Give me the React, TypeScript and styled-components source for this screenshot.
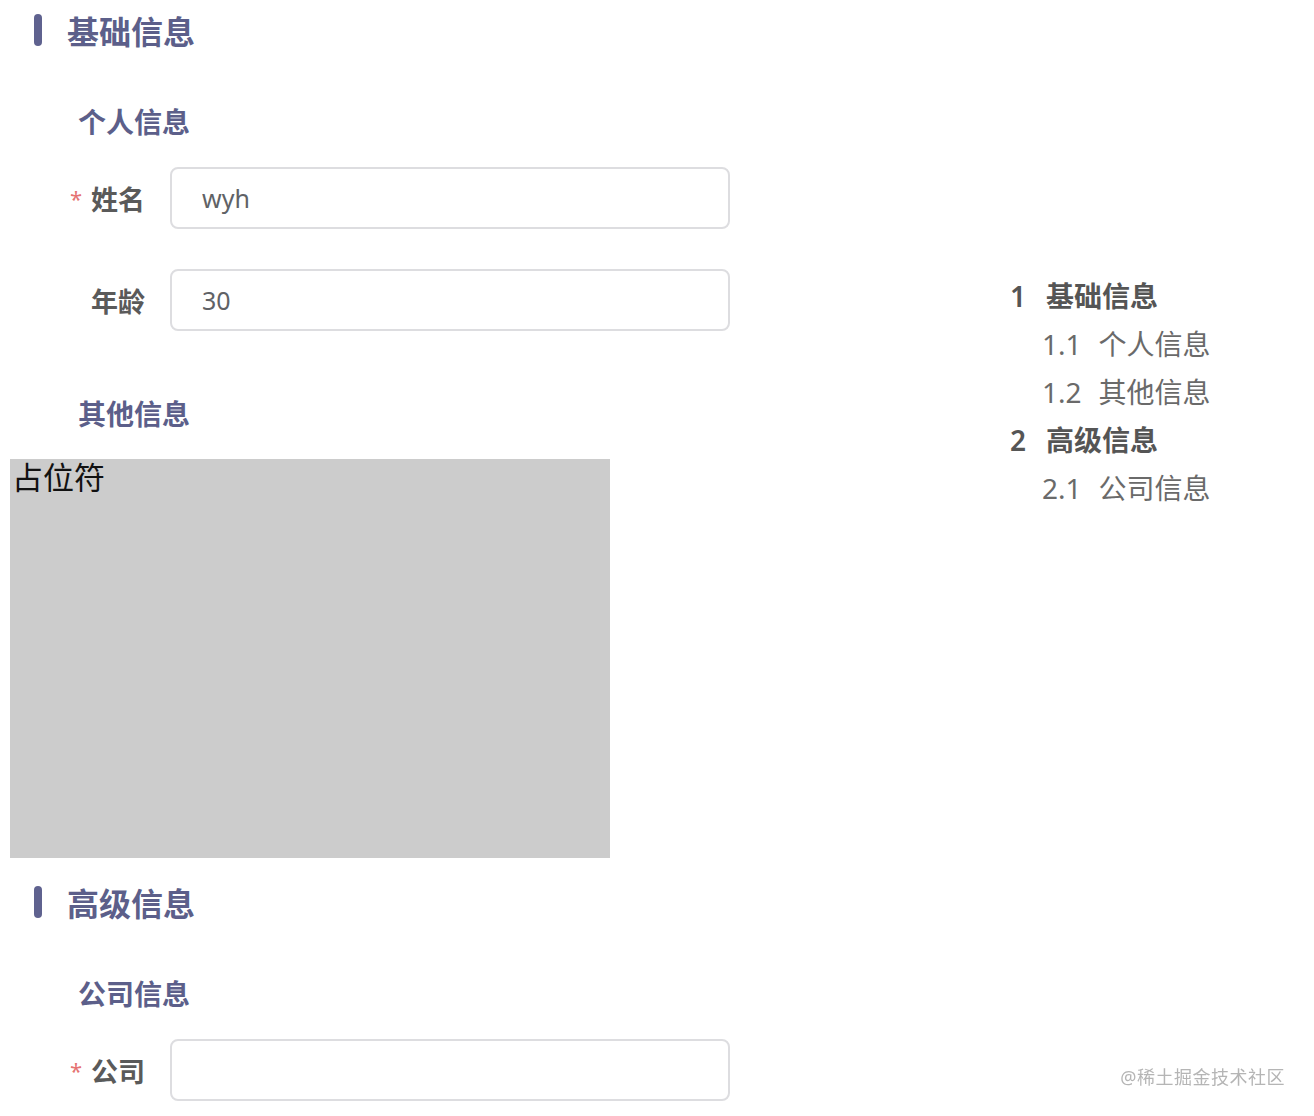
import React from 'react';
import styled, {createGlobalStyle} from 'styled-components';

const GlobalStyle = createGlobalStyle`
  body {
    margin: 0;
    background: #FFFFFF;
    font-family: "Noto Sans", "Noto Sans CJK SC", sans-serif;
  }
`;

const Page = styled.div`
  display: flex;
  align-items: flex-start;
  width: 1314px;
  padding: 0 10px;
  box-sizing: border-box;
`;

const Main = styled.div`
  display: flex;
  flex-direction: column;
  flex: 0 0 720px;
`;

const SectionTitle = styled.h2`
  display: flex;
  align-items: center;
  height: 60px;
  margin: ${({$first}: {$first?: boolean}) => ($first ? '0' : '14px')} 0 19px;
  padding-left: 24px;
  font-size: 32px;
  font-weight: 600;
  color: #5C5F8A;

  &::before {
    content: '';
    width: 8px;
    height: 32px;
    margin-right: 25px;
    border-radius: 4px;
    background: #5F628F;
  }
`;

const SubTitle = styled.h3`
  height: 40px;
  line-height: 40px;
  margin: 23px 0 25px;
  padding-left: 68px;
  font-size: 28px;
  font-weight: 600;
  color: #5C5F8A;
`;

const FormRow = styled.div`
  display: flex;
  align-items: center;
  margin-bottom: 40px;
`;

const Label = styled.label`
  flex: 0 0 160px;
  padding-right: 25px;
  box-sizing: border-box;
  text-align: right;
  font-size: 27px;
  font-weight: 600;
  color: #5A5A5A;
`;

const Required = styled.span`
  margin-right: 9px;
  font-size: 22px;
  font-weight: 400;
  color: #E57373;
  vertical-align: 3px;
`;

const Input = styled.input`
  width: 560px;
  height: 62px;
  padding: 0 30px;
  box-sizing: border-box;
  border: 2px solid #DDDDE0;
  border-radius: 8px;
  font-family: "Noto Sans", "Noto Sans CJK SC", sans-serif;
  font-size: 25px;
  color: #606266;
  outline: none;
`;

const Placeholder = styled.div`
  width: 600px;
  height: 399px;
  padding: 0 2px;
  box-sizing: border-box;
  background: #CCCCCC;
  font-size: 31px;
  line-height: 36px;
  color: #111111;
`;

const Nav = styled.nav`
  margin: 272px 0 0 280px;
`;

const NavItem = styled.div`
  display: flex;
  height: 48px;
  line-height: 48px;
  padding-left: ${({$sub}: {$sub?: boolean}) => ($sub ? '32px' : '0')};
  font-size: 28px;
  font-weight: ${({$sub}: {$sub?: boolean}) => ($sub ? 400 : 600)};
  color: ${({$sub}: {$sub?: boolean}) => ($sub ? '#6A6A6A' : '#555555')};

  span {
    margin-right: ${({$sub}: {$sub?: boolean}) => ($sub ? '17px' : '20px')};
  }
`;

const Watermark = styled.div`
  position: fixed;
  right: 29px;
  bottom: 27px;
  font-size: 18px;
  color: #B5B5B5;
  letter-spacing: 0.5px;
`;

const nav = [
    {no: '1', text: '基础信息', sub: false},
    {no: '1.1', text: '个人信息', sub: true},
    {no: '1.2', text: '其他信息', sub: true},
    {no: '2', text: '高级信息', sub: false},
    {no: '2.1', text: '公司信息', sub: true},
];

export default function App() {
    return (
        <>
            <GlobalStyle/>
            <Page>
                <Main>
                    <SectionTitle $first>基础信息</SectionTitle>
                    <SubTitle>个人信息</SubTitle>
                    <FormRow>
                        <Label><Required>*</Required>姓名</Label>
                        <Input defaultValue="wyh"/>
                    </FormRow>
                    <FormRow>
                        <Label>年龄</Label>
                        <Input defaultValue="30"/>
                    </FormRow>
                    <SubTitle>其他信息</SubTitle>
                    <Placeholder>占位符</Placeholder>

                    <SectionTitle>高级信息</SectionTitle>
                    <SubTitle>公司信息</SubTitle>
                    <FormRow>
                        <Label><Required>*</Required>公司</Label>
                        <Input/>
                    </FormRow>
                </Main>
                <Nav>
                    {nav.map((item) => (
                        <NavItem key={item.no} $sub={item.sub}>
                            <span>{item.no}</span>{item.text}
                        </NavItem>
                    ))}
                </Nav>
            </Page>
            <Watermark>@稀土掘金技术社区</Watermark>
        </>
    );
}
